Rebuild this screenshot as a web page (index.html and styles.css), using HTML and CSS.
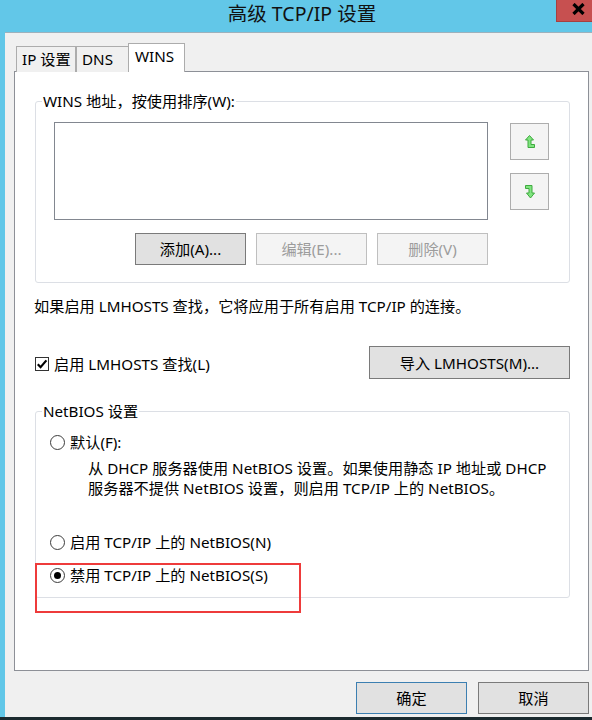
FILE: index.html
```html
<!DOCTYPE html>
<html lang="zh-CN">
<head>
<meta charset="utf-8">
<title>高级 TCP/IP 设置</title>
<link rel="stylesheet" href="styles.css">
</head>
<body>
<div class="window">
  <div class="titlebar">
    <div class="title">高级 TCP/IP 设置</div>
    <div class="close">
      <svg width="13" height="12" viewBox="0 0 13 12"><path d="M1.5 1 L11.5 11 M11.5 1 L1.5 11" stroke="#000" stroke-width="3.2" fill="none"/></svg>
    </div>
  </div>
  <div class="client">
    <div class="tabs">
      <div class="tab tab-ip">IP 设置</div>
      <div class="tab tab-dns">DNS</div>
      <div class="tab tab-active">WINS</div>
    </div>
    <div class="panel">
      <fieldset class="group">
        <legend>WINS 地址，按使用排序(W):</legend>
        <div class="wins-body">
          <div class="wins-main">
            <div class="listbox"></div>
            <div class="btn-row">
              <div class="btn">添加(A)...</div>
              <div class="btn disabled">编辑(E)...</div>
              <div class="btn disabled">删除(V)</div>
            </div>
          </div>
          <div class="arrows">
            <div class="arrow-btn">
              <svg width="10" height="14" viewBox="0 0 10 14"><path d="M4.5 0.5 L8.5 5 H6 V9.5 H9.5 V12.5 H3 V5 H0.5 Z" fill="#80E480" stroke="#3FAA3F" stroke-width="1"/></svg>
            </div>
            <div class="arrow-btn">
              <svg width="10" height="14" viewBox="0 0 10 14"><path d="M0.5 0.5 H7 V8 H9.5 L5.5 13 L1.5 8 H4 V3.5 H0.5 Z" fill="#80E480" stroke="#3FAA3F" stroke-width="1"/></svg>
            </div>
          </div>
        </div>
      </fieldset>

      <p class="info">如果启用 LMHOSTS 查找，它将应用于所有启用 TCP/IP 的连接。</p>

      <div class="lm-row">
        <div class="check">
          <span class="checkbox">
            <svg width="12" height="12" viewBox="0 0 12 12"><path d="M1.8 6.2 L4.6 9.2 L10.4 2.4" stroke="#000" stroke-width="2.2" fill="none"/></svg>
          </span>
          <span>启用 LMHOSTS 查找(L)</span>
        </div>
        <div class="btn btn-import">导入 LMHOSTS(M)...</div>
      </div>

      <fieldset class="group">
        <legend>NetBIOS 设置</legend>
        <div class="netbios-body">
          <div class="radio-row"><span class="radio"></span><span>默认(F):</span></div>
          <div class="desc">
            <div>从 DHCP 服务器使用 NetBIOS 设置。如果使用静态 IP 地址或 DHCP</div>
            <div>服务器不提供 NetBIOS 设置，则启用 TCP/IP 上的 NetBIOS。</div>
          </div>
          <div class="radio-row row-enable"><span class="radio"></span><span>启用 TCP/IP 上的 NetBIOS(N)</span></div>
          <div class="radio-row row-disable"><span class="radio checked"></span><span>禁用 TCP/IP 上的 NetBIOS(S)</span></div>
        </div>
      </fieldset>

      <div class="highlight"></div>
    </div>

    <div class="footer">
      <div class="btn btn-ok">确定</div>
      <div class="btn">取消</div>
    </div>
  </div>
  <div class="taskbar"></div>
</div>
</body>
</html>
```

FILE: styles.css
```css
* { box-sizing: border-box; }

html, body {
  margin: 0;
  padding: 0;
}

body {
  font-family: "Noto Sans", "Noto Sans CJK SC", sans-serif;
  font-size: 15.2px;
  line-height: 20px;
  color: #000;
  background: #62C7E8;
}

.window {
  position: relative;
  width: 592px;
  height: 720px;
  overflow: hidden;
  background: #62C7E8;
}

.titlebar {
  position: relative;
  height: 32px;
}

.title {
  font-size: 19.5px;
  line-height: 28px;
  text-align: center;
  padding-left: 12px;
  color: #111;
}

.close {
  position: absolute;
  top: 0;
  right: -9px;
  width: 45px;
  height: 22px;
  background: #C75050;
  border: 1px solid #A64040;
  border-top: none;
  display: flex;
  align-items: center;
  justify-content: center;
  padding-bottom: 4px;
}

.client {
  margin-left: 5px;
  height: 685px;
  background: #F0F0F0;
  border-top: 1px solid #9DB1BC;
  padding: 10px 3px 0 9px;
}

.tabs {
  position: relative;
  z-index: 1;
  display: flex;
  align-items: flex-end;
  height: 29px;
  margin-left: 2px;
  margin-bottom: -1px;
}

.tab {
  height: 26px;
  line-height: 24px;
  border: 1px solid #ACACAC;
  border-bottom: none;
  background: #F0F0F0;
  white-space: nowrap;
}

.tab-ip {
  width: 60px;
  padding-left: 5px;
}

.tab-dns {
  width: 52px;
  padding-left: 5px;
  border-left: 1px solid #ACACAC;
  border-right: none;
}

.tab-active {
  width: 57px;
  height: 29px;
  line-height: 25px;
  padding-left: 6px;
  background: #FFFFFF;
}

.panel {
  position: relative;
  height: 600px;
  background: #FFFFFF;
  border: 1px solid #8D9097;
  padding: 0 18px 0 20px;
}

.group {
  margin: 0;
  padding: 0;
  min-width: 0;
  border: 1px solid #DCDFE5;
  border-radius: 3px;
}

.group:first-child {
  margin-top: 19px;
}

.group legend {
  margin-left: 6px;
  padding: 0 1px;
  line-height: 20px;
}

.wins-body {
  display: flex;
  padding: 11px 20px 17px 18px;
}

.wins-main {
  width: 434px;
}

.listbox {
  height: 98px;
  border: 1px solid #828790;
  background: #FFFFFF;
}

.btn-row {
  display: flex;
  justify-content: flex-end;
  gap: 10px;
  margin-top: 13px;
}

.btn {
  width: 111px;
  height: 32px;
  display: flex;
  align-items: center;
  justify-content: center;
  background: #E1E1E1;
  border: 1px solid #7A7A7A;
  white-space: nowrap;
}

.btn.disabled {
  background: #F4F4F4;
  border-color: #BFBFBF;
  color: #9C9C9C;
}

.arrows {
  margin-left: 22px;
  padding-top: 1px;
  display: flex;
  flex-direction: column;
  gap: 13px;
}

.arrow-btn {
  width: 39px;
  height: 37px;
  background: #F4F4F4;
  border: 1px solid #ADADAD;
  display: flex;
  align-items: center;
  justify-content: center;
}

.info {
  margin: 13px 0 0 -1px;
  white-space: nowrap;
}

.lm-row {
  margin-top: 30px;
  height: 33px;
  display: flex;
  align-items: center;
  justify-content: space-between;
}

.check {
  display: flex;
  align-items: center;
  gap: 5px;
  margin-top: 3px;
}

.checkbox {
  width: 14px;
  height: 14px;
  border: 1px solid #333333;
  background: #FFFFFF;
  display: flex;
  align-items: center;
  justify-content: center;
}

.btn-import {
  width: 201px;
  height: 33px;
}

.lm-row + .group {
  margin-top: 22px;
}

.netbios-body {
  padding: 11px 0 12px 14px;
}

.radio-row {
  display: flex;
  align-items: center;
  gap: 5px;
  height: 20px;
  white-space: nowrap;
}

.radio {
  width: 15px;
  height: 15px;
  border: 1px solid #3C3C3C;
  border-radius: 50%;
  background: #FFFFFF;
  display: flex;
  align-items: center;
  justify-content: center;
}

.radio.checked::after {
  content: "";
  width: 7px;
  height: 7px;
  border-radius: 50%;
  background: #000;
}

.desc {
  margin: 6px 0 0 38px;
  white-space: nowrap;
}

.row-enable {
  margin-top: 34px;
}

.row-disable {
  margin-top: 13px;
}

.highlight {
  position: absolute;
  left: 20px;
  top: 491px;
  width: 266px;
  height: 50px;
  border: 2px solid #EE3B3B;
}

.footer {
  display: flex;
  justify-content: flex-end;
  gap: 11px;
  margin-top: 11px;
}

.btn-ok {
  border-color: #3C7FB1;
}

.taskbar {
  height: 3px;
  margin-left: -5px;
  background: #1B2A2F;
}
```
